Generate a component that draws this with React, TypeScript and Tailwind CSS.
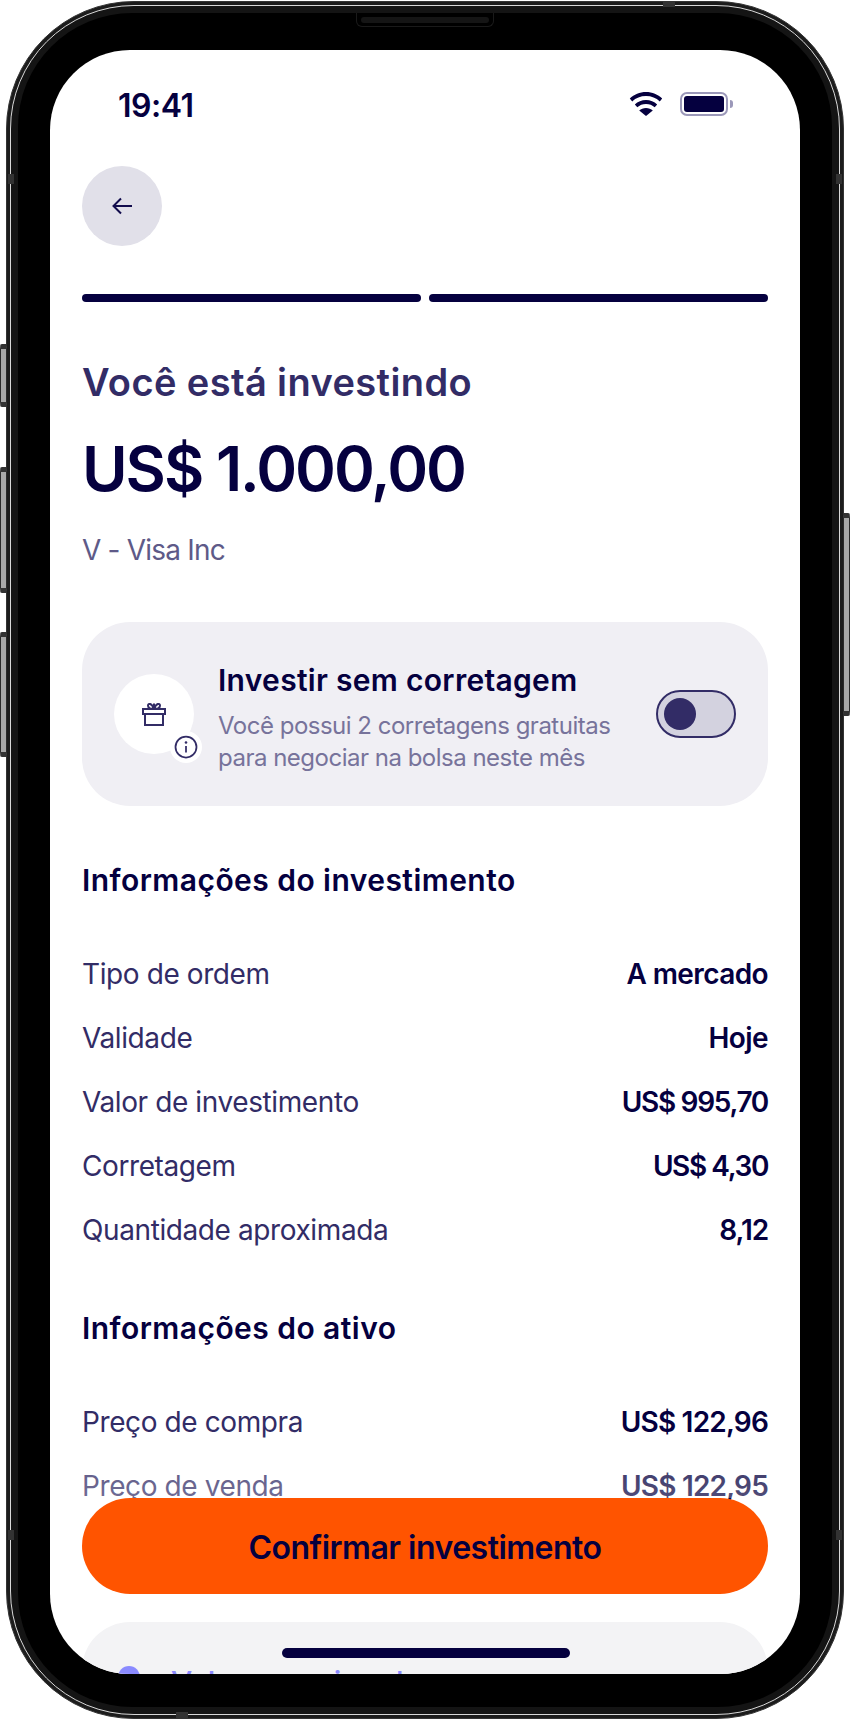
const Row = ({ label, value, track }: { label: string; value: string; track: string }) => (
  <div className="flex h-16 items-center justify-between">
    <span className="text-[28px] leading-9 tracking-[-0.4px] text-[#322c66]">{label}</span>
    <span className={`text-[28px] leading-9 font-semibold text-[#05003f] ${track}`}>{value}</span>
  </div>
);

const SideButton = ({ cls }: { cls: string }) => (
  <div className={`absolute w-[7px] border-x-[1.5px] border-y-[5px] border-x-[#2a2a2a] border-y-[#333] bg-[#a8a8a8] ${cls}`} />
);

export default function App() {
  return (
    <div className="relative h-[1720px] w-[850px] overflow-hidden bg-white font-['Inter',sans-serif]">
      <SideButton cls="left-0 top-[344px] h-[63px] rounded-l-[2px]" />
      <SideButton cls="left-0 top-[467px] h-[126px] rounded-l-[2px]" />
      <SideButton cls="left-0 top-[632px] h-[125px] rounded-l-[2px]" />
      <SideButton cls="right-0 top-[513px] h-[203px] rounded-r-[2px]" />

      <div className="mx-[6px] mt-px h-[1718px] w-[838px] rounded-[128px] border-[1.5px] border-[#333] bg-[#1c1c1c] p-[3px]">
        <div className="h-full w-full rounded-[124px] border-[1.5px] border-[#d8d8d8] bg-[#141414] p-[7px]">
          <div className="relative h-full w-full rounded-[114px] bg-black px-8 pt-[37px]">
            <div className="absolute left-1/2 top-0 flex h-[14px] w-[138px] -translate-x-1/2 items-center justify-center rounded-b-[6px] border border-t-0 border-[#1a1a1a]">
              <div className="h-[6px] w-[128px] rounded-full bg-[#151515]" />
            </div>

            <div className="relative h-[1624px] w-[750px] overflow-hidden rounded-[80px] bg-white px-8">
              <div className="flex h-[116px] items-start justify-between pl-9 pr-[35px]">
                <span className="mt-9 text-[32px] leading-10 font-semibold tracking-[-0.5px] text-[#05003f]">19:41</span>
                <div className="mt-[42px] flex items-center gap-[17px]">
                  <svg width="34" height="24" viewBox="0 0 34 24" fill="#05003f">
                    <path d="M17 0C10.7 0 5.1 2.5 .8 6.5l2.4 2.9C6.800 6 11.600 4 17 4s10.200 2 13.800 5.400l2.400-2.900C28.900 2.500 23.300 0 17 0Z" />
                    <path d="M17 8c-4.300 0-8.200 1.600-11.200 4.400l2.500 2.900C10.600 13.200 13.600 12 17 12s6.400 1.200 8.700 3.300l2.500-2.900C25.200 9.600 21.300 8 17 8Z" />
                    <path d="M17 16c-2.700 0-5 .9-6.800 2.500L17 24l6.800-5.500C22 16.900 19.700 16 17 16Z" />
                  </svg>
                  <div className="flex items-center gap-[2px]">
                    <div className="flex h-6 w-12 items-center justify-center rounded-[7px] border-2 border-[#9b98b9]">
                      <div className="h-4 w-10 rounded-[3px] bg-[#05003f]" />
                    </div>
                    <div className="h-2 w-[3px] rounded-r-full bg-[#9b98b9]" />
                  </div>
                </div>
              </div>

              <button className="flex h-20 w-20 items-center justify-center rounded-full bg-[#e1e0e9]">
                <svg width="20" height="18" viewBox="0 0 20 18" fill="none" stroke="#120c4d" strokeWidth="2">
                  <path d="M20 9H2M9 1.500 1.500 9 9 16.500" />
                </svg>
              </button>

              <div className="mt-12 flex gap-2">
                <div className="h-2 flex-1 rounded-full bg-[#05003f]" />
                <div className="h-2 flex-1 rounded-full bg-[#05003f]" />
              </div>

              <h1 className="mt-[58px] text-[38px] leading-11 font-semibold tracking-[0.4px] text-[#322c66]">Você está investindo</h1>
              <p className="mt-[29px] text-[62px] leading-[72px] font-semibold tracking-[-2px] text-[#05003f]">US$ 1.000,00</p>
              <p className="mt-[27px] text-[28px] leading-9 tracking-[-0.8px] text-[#5e5a88]">V - Visa Inc</p>

              <div className="mt-[54px] flex h-[184px] items-center rounded-[48px] bg-[#f0eff4] pl-8 pr-8">
                <div className="relative flex h-20 w-20 shrink-0 items-center justify-center rounded-full bg-white">
                  <svg width="24" height="24" viewBox="0 0 24 24" fill="none" stroke="#322c66" strokeWidth="2">
                    <path d="M1 7h22v5H1zM3 12v11h18V12M12 7V1.500M12 7C9 7 6 6 6 3.500 6 1 10 1 12 7ZM12 7c3 0 6-1 6-3.500C18 1 14 1 12 7Z" />
                  </svg>
                  <div className="absolute -bottom-[9px] -right-2 flex h-8 w-8 items-center justify-center rounded-full bg-white">
                    <svg width="24" height="24" viewBox="0 0 24 24" fill="none" stroke="#322c66" strokeWidth="1.750">
                      <circle cx="12" cy="12" r="10.500" />
                      <path d="M12 11v6.500" />
                      <circle cx="12" cy="7.500" r="1.300" fill="#322c66" stroke="none" />
                    </svg>
                  </div>
                </div>
                <div className="ml-6 flex-1 pt-[6px]">
                  <p className="text-[30px] leading-10 font-semibold tracking-[0.3px] text-[#05003f]">Investir sem corretagem</p>
                  <p className="mt-[10px] text-[24px] leading-8 tracking-[-0.5px] text-[#77739b]">Você possui 2 corretagens gratuitas para negociar na bolsa neste mês</p>
                </div>
                <div className="flex h-12 w-20 shrink-0 items-center rounded-full border-2 border-[#322c66] bg-[#d3d2df] pl-[6px]">
                  <div className="h-8 w-8 rounded-full bg-[#322c66]" />
                </div>
              </div>

              <h2 className="mt-[54px] text-[30px] leading-10 font-semibold tracking-[0.45px] text-[#05003f]">Informações do investimento</h2>
              <div className="mt-[42px]">
                <Row label="Tipo de ordem" value="A mercado" track="tracking-[-0.6px]" />
                <Row label="Validade" value="Hoje" track="tracking-[-0.6px]" />
                <Row label="Valor de investimento" value="US$ 995,70" track="tracking-[-1.3px]" />
                <Row label="Corretagem" value="US$ 4,30" track="tracking-[-1.4px]" />
                <Row label="Quantidade aproximada" value="8,12" track="tracking-[-1.1px]" />
              </div>
              <h2 className="mt-[46px] text-[30px] leading-10 font-semibold tracking-[0.45px] text-[#05003f]">Informações do ativo</h2>
              <div className="mt-[42px]">
                <Row label="Preço de compra" value="US$ 122,96" track="tracking-[-0.8px]" />
                <Row label="Preço de venda" value="US$ 122,95" track="tracking-[-0.8px]" />
              </div>

              <div className="absolute inset-x-0 top-[1400px] h-[48px] bg-gradient-to-b from-white/20 to-white/30" />
              <button className="absolute inset-x-8 top-[1448px] h-24 rounded-[48px] bg-[#ff5400] pt-1 text-[32px] font-semibold tracking-[-0.5px] text-[#05003f]">
                Confirmar investimento
              </button>

              <div className="absolute inset-x-8 top-[1572px] flex h-[200px] items-start rounded-t-[48px] bg-[#f3f3f5] pl-9 pt-10">
                <div className="h-[22px] w-[22px] shrink-0 translate-y-1 rounded-full bg-[#8a8aff]" />
                <span className="ml-[31px] text-[30px] leading-10 font-medium text-[#8a8aff]">Valor aproximado</span>
              </div>
              <div className="absolute left-[232px] top-[1598px] h-[10px] w-[288px] rounded-full bg-[#05003f]" />
            </div>
          </div>
        </div>
      </div>

      <div className="absolute left-2 top-[174px] h-[10px] w-[6px] bg-[#333]" />
      <div className="absolute right-2 top-[174px] h-[10px] w-[6px] bg-[#333]" />
      <div className="absolute left-2 top-[1530px] h-[10px] w-[6px] bg-[#333]" />
      <div className="absolute right-2 top-[1530px] h-[10px] w-[6px] bg-[#333]" />
      <div className="absolute left-[663px] top-px h-[6px] w-[12px] bg-[#333]" />
      <div className="absolute left-[176px] top-[1712px] h-[6px] w-[12px] bg-[#333]" />
    </div>
  );
}
